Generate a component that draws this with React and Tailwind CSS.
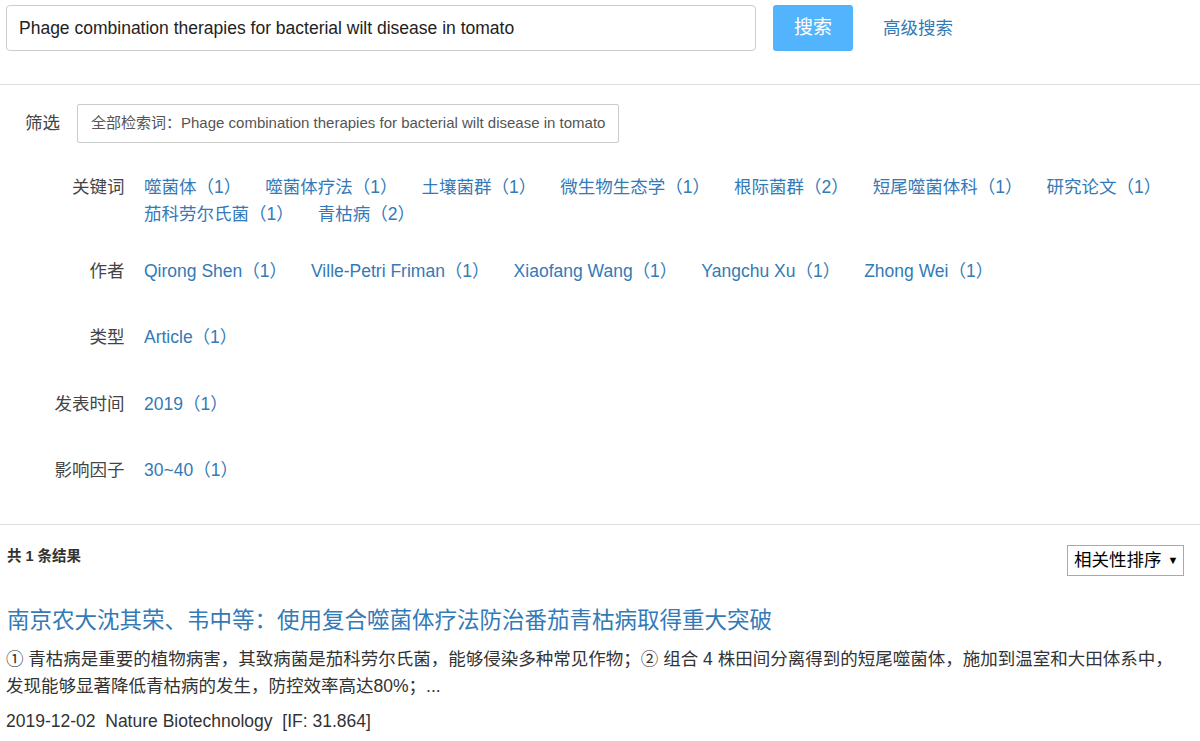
import React from "react";

// filter groups shown under the search bar
const filters = [
  {
    label: "关键词",
    items: [
      "噬菌体（1）",
      "噬菌体疗法（1）",
      "土壤菌群（1）",
      "微生物生态学（1）",
      "根际菌群（2）",
      "短尾噬菌体科（1）",
      "研究论文（1）",
      "茄科劳尔氏菌（1）",
      "青枯病（2）",
    ],
    gap: "mt-[31px]",
  },
  {
    label: "作者",
    items: [
      "Qirong Shen（1）",
      "Ville-Petri Friman（1）",
      "Xiaofang Wang（1）",
      "Yangchu Xu（1）",
      "Zhong Wei（1）",
    ],
    gap: "mt-[30px]",
  },
  { label: "类型", items: ["Article（1）"], gap: "mt-[39px]" },
  { label: "发表时间", items: ["2019（1）"], gap: "mt-[40px]" },
  { label: "影响因子", items: ["30~40（1）"], gap: "mt-[39px]" },
];

function App() {
  return (
    <div className="min-h-screen bg-white font-['Liberation_Sans','Noto_Sans_CJK_SC',sans-serif] text-[#333]">

      {/* SEARCH BAR */}
      <div className="flex items-center px-[6px] pt-[5px] pb-[33px] border-b border-[#ddd]">
        <div className="w-[750px] h-[46px] border border-[#ccc] rounded-[4px] flex items-center px-[12px] text-[17.5px] text-[#222]">
          Phage combination therapies for bacterial wilt disease in tomato
        </div>
        <button className="ml-[17px] w-[80px] h-[46px] rounded-[3px] bg-[#52b4fc] text-white text-[19px]">
          搜索
        </button>
        <a className="ml-[30px] text-[17.5px] text-[#337ab7] cursor-pointer">高级搜索</a>
      </div>

      {/* FILTERS */}
      <div className="px-[6px] pt-[19px] pb-[40px] border-b border-[#ddd]">

        <div className="flex items-center pl-[19px]">
          <span className="text-[17.5px] text-[#444]">筛选</span>
          <div className="ml-[17px] h-[39px] border border-[#ccc] rounded-[2px] flex items-center px-[13px] text-[15px] text-[#555]">
            全部检索词：Phage combination therapies for bacterial wilt disease in tomato
          </div>
        </div>

        {filters.map((f) => (
          <div key={f.label} className={`flex ${f.gap}`}>
            <div className="w-[118.5px] shrink-0 text-right text-[17.5px] leading-[27px] text-[#444]">
              {f.label}
            </div>
            <div className="ml-[19.5px] w-[1050px] flex flex-wrap gap-x-[24px] text-[17.5px] leading-[27px] text-[#337ab7]">
              {f.items.map((item) => (
                <a key={item} className="cursor-pointer whitespace-nowrap">
                  {item}
                </a>
              ))}
            </div>
          </div>
        ))}
      </div>

      {/* RESULTS */}
      <div className="pl-[7px] pr-[16px] pt-[20px]">
        <div className="flex justify-between items-start">
          <span className="mt-[1px] text-[14.5px] leading-[20px] font-bold text-[#333]">共 1 条结果</span>
          <div className="w-[117px] h-[31px] border border-[#a9a9a9] flex items-center pl-[6px] text-[17.5px] text-black">
            相关性排序
            <span className="ml-[6px] text-[11px]">▼</span>
          </div>
        </div>

        <a className="block mt-[29px] text-[22.5px] leading-[32px] text-[#337ab7] cursor-pointer">
          南京农大沈其荣、韦中等：使用复合噬菌体疗法防治番茄青枯病取得重大突破
        </a>

        <p className="mt-[9px] -ml-[1px] w-[1180px] text-[17.5px] leading-[27px] text-[#333]">
          ① 青枯病是重要的植物病害，其致病菌是茄科劳尔氏菌，能够侵染多种常见作物；② 组合 4 株田间分离得到的短尾噬菌体，施加到温室和大田体系中，发现能够显著降低青枯病的发生，防控效率高达80%；...
        </p>

        <div className="mt-[8px] -ml-[1px] text-[17.5px] leading-[27px] text-[#333] whitespace-pre">
          {"2019-12-02  Nature Biotechnology  [IF: 31.864]"}
        </div>
      </div>

    </div>
  );
}

export default App;
